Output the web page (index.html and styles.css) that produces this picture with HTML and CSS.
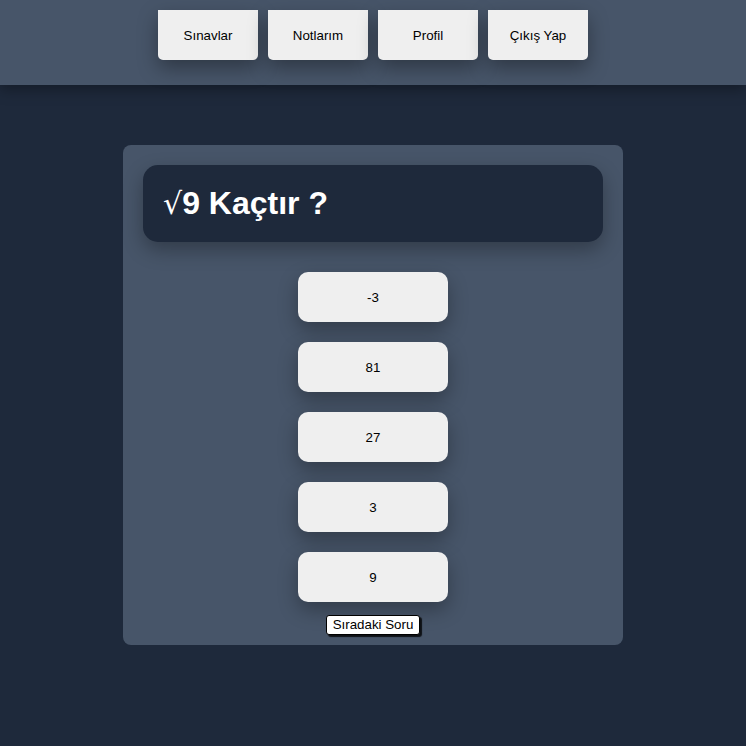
FILE: index.html
```html
<!DOCTYPE html>
<html lang="tr">
<head>
<meta charset="utf-8">
<title>Sınav</title>
<link rel="stylesheet" href="styles.css">
</head>
<body>
<header class="topbar">
  <nav class="nav">
    <button class="nav-btn">Sınavlar</button>
    <button class="nav-btn">Notlarım</button>
    <button class="nav-btn">Profil</button>
    <button class="nav-btn">Çıkış Yap</button>
  </nav>
</header>
<main class="main">
  <section class="card">
    <div class="question">
      <h1 class="question-text"><span class="root">√</span>9 Kaçtır ?</h1>
    </div>
    <div class="answers">
      <button class="answer">-3</button>
      <button class="answer">81</button>
      <button class="answer">27</button>
      <button class="answer">3</button>
      <button class="answer">9</button>
    </div>
    <div class="next-row">
      <button class="next-btn">Sıradaki Soru</button>
    </div>
  </section>
</main>
</body>
</html>
```
FILE: styles.css
```css
* { box-sizing: border-box; }
html, body {
  margin: 0;
  padding: 0;
}
body {
  background: #1e293b;
  font-family: "Liberation Sans", Arial, sans-serif;
  min-height: 746px;
}
.topbar {
  height: 85px;
  background: #475569;
  box-shadow: 0 4px 14px rgba(0, 0, 0, 0.35);
  position: relative;
  z-index: 1;
}
.nav {
  display: flex;
  justify-content: center;
  gap: 10px;
  padding-top: 10px;
}
.nav-btn {
  width: 100px;
  height: 50px;
  border: none;
  border-radius: 0 0 5px 5px;
  background: #efefef;
  color: #000;
  font-family: "Liberation Sans", Arial, sans-serif;
  font-size: 13.33px;
  box-shadow: 0 8px 20px rgba(0, 0, 0, 0.35);
  padding: 0;
}
.main {
  display: flex;
  justify-content: center;
  padding-top: 60px;
}
.card {
  width: 500px;
  height: 500px;
  background: #475569;
  border-radius: 8px;
  padding: 20px;
  display: flex;
  flex-direction: column;
}
.question {
  background: #1e293b;
  border-radius: 15px;
  padding: 20px;
  box-shadow: 0 8px 20px rgba(0, 0, 0, 0.3);
}
.question-text {
  margin: 0;
  color: #fff;
  font-size: 32px;
  font-weight: bold;
  line-height: 37px;
}
.root {
  font-family: "DejaVu Serif", serif;
  font-weight: normal;
  font-size: 30px;
}
.answers {
  display: flex;
  flex-direction: column;
  align-items: center;
  gap: 20px;
  margin-top: 30px;
}
.answer {
  width: 150px;
  height: 50px;
  border: none;
  border-radius: 10px;
  background: #efefef;
  color: #000;
  font-family: "Liberation Sans", Arial, sans-serif;
  font-size: 13.33px;
  box-shadow: 0 8px 20px rgba(0, 0, 0, 0.3);
  padding: 0;
}
.next-row {
  display: flex;
  justify-content: center;
  margin-top: 13px;
}
.next-btn {
  background: #fff;
  color: #000;
  border: 1px solid #000;
  border-radius: 3px;
  font-family: "Liberation Sans", Arial, sans-serif;
  font-size: 13.33px;
  padding: 1px 6px;
  height: 20px;
  line-height: 16px;
  box-shadow: 2px 2px 1px rgba(0, 0, 0, 0.8);
}
```
